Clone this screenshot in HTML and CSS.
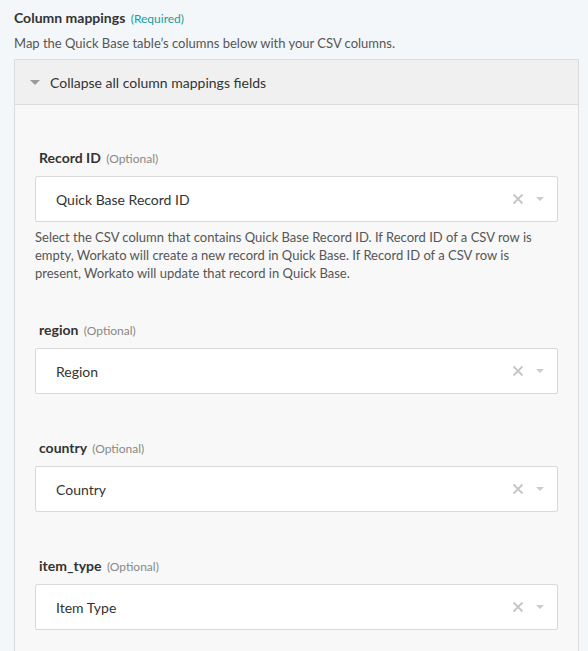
FILE: index.html
```html
<!DOCTYPE html>
<html>
<head>
<meta charset="utf-8">
<link rel="stylesheet" href="styles.css">
</head>
<body>
<div class="page">
  <div class="title">Column mappings <span class="req">(Required)</span></div>
  <div class="desc">Map the Quick Base table’s columns below with your CSV columns.</div>
  <div class="panel">
    <div class="panel-head">
      <svg class="caret-head" width="10" height="5" viewBox="0 0 10 5"><path d="M0 0h10L5 5z" fill="#9a9a9a"/></svg>
      <span>Collapse all column mappings fields</span>
    </div>
    <div class="panel-body">
      <div class="field">
        <div class="label">Record ID <span class="opt">(Optional)</span></div>
        <div class="select">
          <span class="value">Quick Base Record ID</span>
          <svg class="clear" width="12" height="12" viewBox="0 0 12 12"><path d="M1.5 1.5L10.5 10.5M10.5 1.5L1.5 10.5" stroke="#c6c6c6" stroke-width="1.8"/></svg>
          <svg class="arrow" width="8" height="4" viewBox="0 0 8 4"><path d="M0 0h8L4 4z" fill="#cccccc"/></svg>
        </div>
        <div class="hint">Select the CSV column that contains Quick Base Record ID. If Record ID of a CSV row is empty, Workato will create a new record in Quick Base. If Record ID of a CSV row is present, Workato will update that record in Quick Base.</div>
      </div>
      <div class="field">
        <div class="label">region <span class="opt">(Optional)</span></div>
        <div class="select">
          <span class="value">Region</span>
          <svg class="clear" width="12" height="12" viewBox="0 0 12 12"><path d="M1.5 1.5L10.5 10.5M10.5 1.5L1.5 10.5" stroke="#c6c6c6" stroke-width="1.8"/></svg>
          <svg class="arrow" width="8" height="4" viewBox="0 0 8 4"><path d="M0 0h8L4 4z" fill="#cccccc"/></svg>
        </div>
      </div>
      <div class="field">
        <div class="label">country <span class="opt">(Optional)</span></div>
        <div class="select">
          <span class="value">Country</span>
          <svg class="clear" width="12" height="12" viewBox="0 0 12 12"><path d="M1.5 1.5L10.5 10.5M10.5 1.5L1.5 10.5" stroke="#c6c6c6" stroke-width="1.8"/></svg>
          <svg class="arrow" width="8" height="4" viewBox="0 0 8 4"><path d="M0 0h8L4 4z" fill="#cccccc"/></svg>
        </div>
      </div>
      <div class="field">
        <div class="label">item_type <span class="opt">(Optional)</span></div>
        <div class="select">
          <span class="value">Item Type</span>
          <svg class="clear" width="12" height="12" viewBox="0 0 12 12"><path d="M1.5 1.5L10.5 10.5M10.5 1.5L1.5 10.5" stroke="#c6c6c6" stroke-width="1.8"/></svg>
          <svg class="arrow" width="8" height="4" viewBox="0 0 8 4"><path d="M0 0h8L4 4z" fill="#cccccc"/></svg>
        </div>
      </div>
    </div>
  </div>
</div>
</body>
</html>
```
FILE: styles.css
```css
html, body {
  margin: 0;
  padding: 0;
  background: #f4f7fa;
  font-family: Lato, "Open Sans", sans-serif;
  color: #333;
}
.page {
  padding: 9px 9px 0 14px;
}
.title {
  height: 18px;
  font-size: 14px;
  font-weight: 700;
  line-height: 18px;
  color: #333;
  white-space: nowrap;
}
.req {
  font-size: 12px;
  font-weight: 400;
  color: #1a9c9c;
  margin-left: 2px;
}
.desc {
  margin-top: 7px;
  font-size: 13px;
  line-height: 18px;
  color: #555;
  margin-bottom: 7px;
}
.panel {
  border: 1px solid #dcdcdc;
  background: #f8f8f8;
}
.panel-head {
  height: 44px;
  background: #f0f0f0;
  border-bottom: 1px solid #dcdcdc;
  display: flex;
  align-items: center;
  padding-left: 15px;
  font-size: 14px;
  color: #333;
}
.caret-head {
  margin-right: 10px;
}
.panel-body {
  padding: 44px 20px 20px 20px;
}
.field {
  padding-bottom: 39px;
}
.label {
  height: 18px;
  font-size: 14px;
  font-weight: 700;
  line-height: 18px;
  padding-left: 4px;
  margin-bottom: 9px;
  color: #333;
  white-space: nowrap;
}
.opt {
  font-size: 12px;
  font-weight: 400;
  color: #888;
  margin-left: 2px;
}
.select {
  height: 44px;
  border: 1px solid #d9d9d9;
  border-radius: 2px;
  background: #fff;
  display: flex;
  align-items: center;
  padding: 0 13px 0 20px;
  margin-bottom: 6px;
}
.value {
  flex: 1;
  font-size: 14px;
  color: #333;
}
.clear {
  margin-right: 12px;
}
.hint {
  font-size: 13px;
  line-height: 18px;
  color: #555;
}
```
